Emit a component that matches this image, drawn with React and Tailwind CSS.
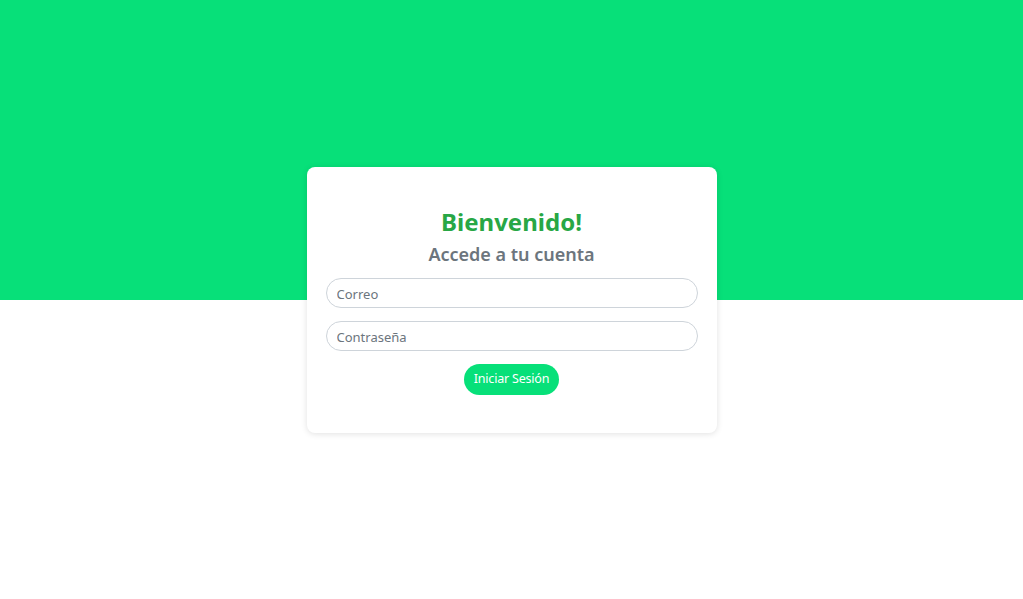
export default function App() {
  return (
    <div className="relative w-full h-[599px] bg-white" style={{ fontFamily: '"Noto Sans", "Open Sans", sans-serif' }}>
      <div className="h-[300px] bg-[#07e079]" />
      <div className="absolute left-0 right-0 top-[167px] flex justify-center">
        <div className="w-[410px] h-[266px] bg-white rounded-lg shadow-[0_1px_6px_rgba(0,0,0,0.12)] px-[19px] pt-[37px] flex flex-col items-center">
          <h1 className="text-[24px] leading-[36px] font-bold text-[#28a745]">Bienvenido!</h1>
          <h2 className="text-[18px] leading-[28px] font-semibold text-[#6c757d]">Accede a tu cuenta</h2>
          <input
            placeholder="Correo"
            className="mt-[10px] w-full h-[30px] rounded-full border border-[#ced4da] px-[10px] pt-[2px] text-[13px] text-[#495057] placeholder:text-[#6c757d] outline-none"
          />
          <input
            placeholder="Contraseña"
            type="password"
            className="mt-[13px] w-full h-[30px] rounded-full border border-[#ced4da] px-[10px] pt-[2px] text-[13px] text-[#495057] placeholder:text-[#6c757d] outline-none"
          />
          <button className="mt-[13px] h-[31px] px-[10px] rounded-full bg-[#07e079] text-white text-[12.5px] tracking-[-0.2px]">Iniciar Sesión</button>
        </div>
      </div>
    </div>
  );
}
